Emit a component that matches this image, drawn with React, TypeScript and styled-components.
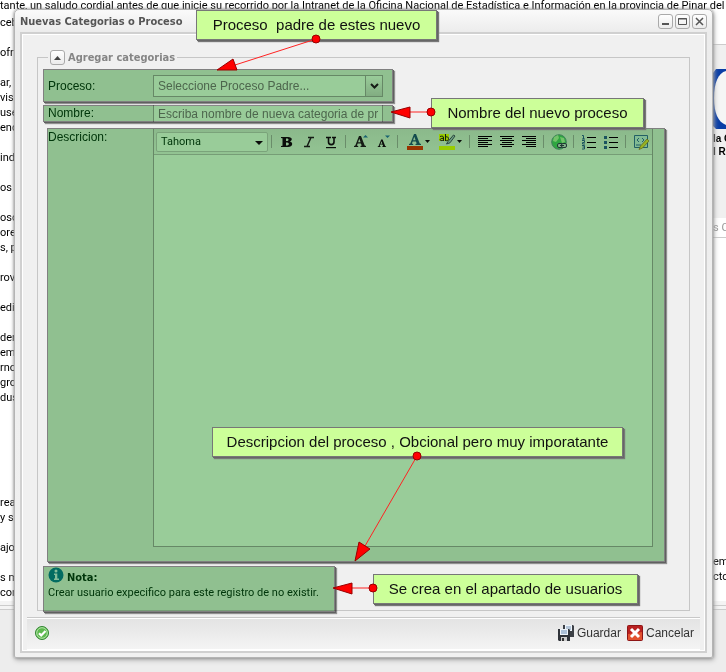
import React from "react";
import styled, { createGlobalStyle, css } from "styled-components";

const tahoma = `Tahoma, "DejaVu Sans Condensed", "DejaVu Sans", sans-serif`;
const bodyFont = `Roboto, "DejaVu Sans Condensed", sans-serif`;
const arial = `"Liberation Sans", Arial, sans-serif`;

const GlobalStyle = createGlobalStyle`
  * { box-sizing: border-box; }
  body { margin: 0; background: #ededed; font-family: ${arial}; font-size: 12px; }
  button, input, select, textarea { font: inherit; color: inherit; margin: 0; padding: 0; border-radius: 0; }
`;

const Page = styled.div`
  position: relative;
  display: grid;
  grid-template-columns: minmax(0, 1fr);
  min-height: 100vh;
  overflow: hidden;
`;

/* ---------- page behind the window ---------- */
const Backdrop = styled.div`
  grid-area: 1 / 1;
  display: flex;
  flex-direction: column;
  font: 11px/15px ${bodyFont};
  color: #000;
  white-space: nowrap;
`;
const Article = styled.div`
  display: grid;
  grid-template-columns: minmax(0, 1fr) 13px;
  height: 601px;
  background: #fff;
  overflow: hidden;
`;
const Intro = styled.p`
  grid-column: 1 / 3;
  margin: -2px 0 0;
  height: 15px;
`;
const Lines = styled.div`
  width: 14px;
  overflow: hidden;
`;
const Line = styled.p`
  margin: 0;
  height: 15px;
`;
const SideColumn = styled.aside`
  display: flex;
  flex-direction: column;
  overflow: hidden;
`;
const Banner = styled.div`
  margin-top: 29px;
  border-top: 1px solid #ccc;
  padding-top: 24px;
  height: 174px;
  background: #f0f0f0;
  font: bold 10px/13px ${arial};
  svg { display: block; margin-bottom: 3px; }
`;
const Crumb = styled.div`
  height: 20px;
  border-bottom: 1px solid #ccc;
  color: #999;
  line-height: 20px;
`;
const SideText = styled.p`
  margin: 316px 0 0;
`;
const PageFooter = styled.div`
  height: 9px;
  background: #f4f4f4;
  border-bottom: 1px solid #ccc;
  &::before { content: ""; display: block; height: 4px; border-bottom: 1px solid #ccc; }
`;

/* ---------- window ---------- */
const Window = styled.section`
  grid-area: 1 / 1;
  position: relative;
  align-self: start;
  margin: 9px 13px 15px 14px;
  padding: 0 5px 4px;
  border: 1px solid #b4b4b4;
  border-radius: 5px 5px 2px 2px;
  background: linear-gradient(#fafafa, #ececec 22px, #f1f1f1);
  box-shadow: 0 0 3px #888, 1px 2px 5px #aaa;
`;
const TitleBar = styled.header`
  display: flex;
  align-items: center;
  gap: 2px;
  height: 22px;
`;
const Title = styled.h1`
  flex: 1;
  margin: 0;
  font: bold 11px/15px ${tahoma};
  color: #555;
`;
const ToolButton = styled.button`
  display: grid;
  place-items: center;
  width: 15px;
  height: 15px;
  border: 1px solid #aaa;
  border-radius: 3px;
  background: linear-gradient(#fff, #ebebeb);
`;
const Frame = styled.div`
  border: 2px solid #d0d0d0;
  box-shadow: inset 0 0 0 1px #fff;
  background: #f0f0f0;
  padding-top: 16px;
`;
const Group = styled.fieldset`
  margin: 0 15px 6px;
  min-width: 0;
  border: 1px solid #c6c6c6;
  padding: 4px 5px 0;
`;
const Legend = styled.legend`
  display: flex;
  align-items: center;
  gap: 3px;
  margin-left: 5px;
  padding: 0 2px;
  height: 15px;
  font: bold 11px/15px ${tahoma};
  color: #858585;
`;

const Highlight = styled.div<{ $width?: number; $height?: number }>`
  position: relative;
  display: flex;
  align-items: center;
  max-width: ${(p) => (p.$width ? `${p.$width}px` : "none")};
  min-height: ${(p) => (p.$height ? `${p.$height}px` : "auto")};
  padding: 0 10px 0 5px;
  color: #041;
  &::after {
    content: "";
    position: absolute;
    inset: 0;
    border: 1px solid #888;
    background: #9c9;
    background-clip: padding-box;
    box-shadow: 1px 1px 0 #666, 2px 2px 1px #999;
    mix-blend-mode: multiply;
    pointer-events: none;
  }
`;
const ProcessRow = styled(Highlight)`
  margin-bottom: 3px;
`;
const NameRow = styled(Highlight)`
  align-items: flex-start;
  margin-bottom: 6px;
`;
const DescriptionRow = styled(Highlight)`
  align-items: stretch;
  margin: 0 19px 4px 4px;
  padding: 1px 12px 15px 1px;
`;
const NoteBox = styled(Highlight)`
  display: block;
  margin-bottom: -2px;
  padding: 1px 5px;
  font: 11px/15px ${bodyFont};
  p { margin: 0; }
`;
const NoteHeading = styled.p`
  display: flex;
  gap: 3px;
  align-items: flex-start;
  height: 18px;
  strong { font: bold 11px/22px ${tahoma}; }
`;
const Label = styled.label`
  flex: none;
  width: 105px;
  line-height: 16px;
`;
const Field = css`
  border: 1px solid #aaa;
  background: #fff;
  color: #808080;
  outline: none;
`;
const Combo = styled.div`
  display: grid;
  grid-template-columns: minmax(0, 1fr) 18px;
  flex: 1;
  height: 22px;
`;
const ComboSelect = styled.select`
  ${Field}
  grid-area: 1 / 1 / 2 / 3;
  appearance: none;
  padding: 0 4px;
  width: 100%;
`;
const Trigger = styled.span`
  grid-area: 1 / 2;
  display: grid;
  place-items: center;
  border: 1px solid #aaa;
  background: linear-gradient(#fff, #d8d8d8);
  pointer-events: none;
`;
const NameInput = styled.input`
  ${Field}
  flex: 1;
  min-width: 0;
  height: 17px;
  padding: 0 4px;
  border-width: 0 1px;
  &::placeholder { color: #808080; opacity: 1; }
`;
const Editor = styled.div`
  flex: 1;
  min-width: 0;
  display: flex;
  flex-direction: column;
  border: 1px solid #aaa;
  border-top: 0;
`;
const Toolbar = styled.div`
  display: flex;
  align-items: center;
  height: 26px;
  padding-left: 2px;
  border-bottom: 1px solid #c4c4c4;
  background: linear-gradient(#e8e8e8, #f4f4f4);
`;
const FontPicker = styled.div`
  display: grid;
  flex: 0 0 112px;
  height: 20px;
  align-items: center;
  border: 1px solid #ccc;
  border-radius: 2px;
  background: #fff;
  font: 11px/15px ${bodyFont};
  svg { grid-area: 1 / 1; justify-self: end; margin: 3px 4px 0; pointer-events: none; }
`;
const FontSelect = styled.select`
  grid-area: 1 / 1;
  appearance: none;
  border: 0;
  outline: none;
  background: transparent;
  padding: 0 4px;
`;
const Separator = styled.i`
  flex: none;
  width: 1px;
  height: 13px;
  margin: 0 4px 0 3px;
  background: #b0b0b0;
`;
const FormatButton = styled.button<{ $wide?: boolean }>`
  flex: none;
  display: flex;
  align-items: center;
  justify-content: center;
  gap: 1px;
  width: ${(p) => (p.$wide ? 32 : 22)}px;
  height: 22px;
  border: 0;
  background: none;
  svg { flex: none; }
`;
const TextArea = styled.textarea`
  display: block;
  height: 391px;
  border: 0;
  outline: none;
  resize: none;
  background: #fff;
`;
const Footer = styled.footer`
  display: flex;
  align-items: center;
  gap: 6px;
  height: 34px;
  margin: 0 5px;
  padding: 0 6px 4px 0;
  border-top: 1px solid #c8c8c8;
  box-shadow: inset 0 1px 0 #fff, inset 0 -2px 0 #fff;
  background: linear-gradient(#e3e3e3, #f5f5f5);
`;
const Status = styled.div`
  display: flex;
  width: 36px;
  padding-left: 7px;
  margin-right: auto;
`;
const ActionButton = styled.button`
  display: flex;
  align-items: center;
  gap: 3px;
  border: 0;
  background: none;
  color: #333;
`;

/* ---------- annotations ---------- */
const Notes = styled.div`
  position: absolute;
  inset: 0;
  pointer-events: none;
`;
const Callout = styled.div<{ $x: number; $y: number; $w: number }>`
  position: absolute;
  left: ${(p) => p.$x}px;
  top: ${(p) => p.$y}px;
  width: ${(p) => p.$w}px;
  height: 30px;
  border: 1px solid #777;
  background: #cf9;
  box-shadow: 1px 1px 0 #666, 2px 2px 1px #777;
  color: #111;
  font-size: 15px;
  line-height: 28px;
  text-align: center;
  white-space: pre;
`;
const Arrows = styled.svg`
  position: absolute;
  inset: 0;
  width: 100%;
  height: 100%;
`;

const Down = () => (
  <svg width="8" height="4" viewBox="0 0 8 4"><path d="M0 0h8L4 4z" fill="#111" /></svg>
);
const Caret = () => (
  <svg width="5" height="3" viewBox="0 0 5 3"><path d="M0 0h5L2.5 3z" fill="#111" /></svg>
);
const Icon = ({ children }: { children: React.ReactNode }) => (
  <svg width="16" height="16" viewBox="0 0 16 16">{children}</svg>
);
const bigA = "M1 13v-1l1.3-.5L6 2h2l3.700 9.500 1.300.5v1H7.500v-1l1.200-.4-.8-2.200H4.700l-.8 2.200 1.300.4v1zM5.100 8.200h2.500L6.300 4.700z";

const BoldIcon = () => (
  <Icon><path fillRule="evenodd" fill="#111" d="M2 3h7c5 0 4.500 4 1.700 4.500C14.500 8 14 13 9 13H2v-1l1.500-.3V4.300L2 4zM7 4.500v2.500h1c2 0 2-2.500 0-2.500zm0 4v3h1.200c2.200 0 2.200-3 0-3z" /></Icon>
);
const ItalicIcon = () => (
  <Icon><path d="M7 3.500h6M3 12.500h6M10 3.500l-4 9" fill="none" stroke="#222" strokeWidth="1.500" /></Icon>
);
const UnderlineIcon = () => (
  <Icon><path d="M3 3.500h5M9 3.500h4M5.500 3.500V8c0 3.500 5.500 3.500 5.500 0V3.500" fill="none" stroke="#111" strokeWidth="1.600" /><path d="M3 13h10v1.200H3z" fill="#111" /></Icon>
);
const GrowIcon = () => (
  <Icon><path fillRule="evenodd" d={bigA} fill="#222" /><path d="M10 3.500h5L12.500 1z" fill="#267abb" /></Icon>
);
const ShrinkIcon = () => (
  <Icon><g transform="translate(2 4) scale(.7)"><path fillRule="evenodd" d={bigA} fill="#111" /></g><path d="M10 1.500h5L12.500 4z" fill="#267abb" /></Icon>
);
const ForeIcon = () => (
  <svg width="17" height="17" viewBox="0 0 17 17"><g transform="translate(1 -1)"><path fillRule="evenodd" d={bigA} fill="#1f5f80" /></g><path d="M0 13h16v4H0z" fill="#ff4000" /></svg>
);
const BackIcon = () => (
  <svg width="17" height="17" viewBox="0 0 17 17">
    <path d="M0 1h10v7H0zM0 13h16v4H0z" fill="#ff0" />
    <path d="M1 3.500c3-1 3.500 0 3.500 1.500v3M4.500 5.300C-1 5.300 1 9 4.500 7M6.500 1v7M6.500 4c4-1.500 4 5 0 3.500" fill="none" stroke="#222" />
    <path d="M14.500 2L9 8.500 7.500 11l3.500-1.200L16 3z" fill="#b5cad9" stroke="#456" />
  </svg>
);
const AlignIcon = ({ side }: { side: "l" | "c" | "r" }) => (
  <Icon>
    {[2, 4, 6, 8, 10, 12].map((y, i) => {
      const w = i % 2 ? 10 : 14;
      const x = side === "l" ? 1 : side === "c" ? 8 - w / 2 : 15 - w;
      return <path key={y} d={`M${x} ${y}h${w}v1h-${w}z`} fill="#000" />;
    })}
  </Icon>
);
const LinkIcon = () => (
  <Icon>
    <circle cx="8" cy="8" r="7.300" fill="#4ed06c" stroke="#6a9e96" />
    <path d="M3 3l4-2 1 3-3 4-3-1zM9 3l4 1 1 4-3 1z" fill="#c0f3b0" />
    <g fill="#d6dde2" stroke="#345"><rect x="6.500" y="9.500" width="5" height="4" rx="1.500" /><rect x="10.500" y="9.500" width="5" height="4" rx="1.500" /></g>
    <path d="M9 11.500h4" stroke="#345" />
  </Icon>
);
const ListIcon = ({ numbered }: { numbered?: boolean }) => (
  <Icon>
    <path d="M6 3h9v1H6zM6 8h9v1H6zM6 13h9v1H6z" fill="#000" />
    {numbered ? (
      <path d="M1 1.500h1.500V5M1 5h3M1 6.500h2.500v2H1.500V10H4M1 11.500h2.500V15H1M1.500 13h2" fill="none" stroke="#2c689e" />
    ) : (
      <path d="M1 2h3v3H1zM1 7h3v3H1zM1 12h3v3H1z" fill="#2c689e" />
    )}
  </Icon>
);
const SourceIcon = () => (
  <Icon>
    <path d="M1.500 1.500h13v12h-13z" fill="#d9eaf7" stroke="#3977a8" />
    <path d="M6 4L4 6l2 2M9 4l2 2-2 2M3 11h5" fill="none" stroke="#3977a8" />
    <path d="M14 5l2 2-6.500 7-3.500 1.500L7.500 12z" fill="#fce038" stroke="#a17a20" strokeWidth=".7" />
  </Icon>
);
const InfoIcon = () => (
  <Icon>
    <circle cx="8" cy="8" r="7.500" fill="#0387a2" />
    <circle cx="8" cy="4" r="1.500" fill="#dcecff" />
    <path d="M6 6.500h3.300v5H11V13H6v-1.500h1V8H6z" fill="#dcecff" />
  </Icon>
);
const CheckIcon = () => (
  <Icon>
    <circle cx="8" cy="8" r="6.500" fill="#5eb94f" stroke="#328632" />
    <circle cx="8" cy="8" r="5.300" fill="none" stroke="#b5e6aa" />
    <path d="M5 8.200l2.200 2.200L11.500 6" fill="none" stroke="#fff" strokeWidth="2.200" />
  </Icon>
);
const SaveIcon = () => (
  <Icon>
    <path d="M5 0h10l1 1v11H5z" fill="#3c4046" /><path d="M7 0h7v6H7z" fill="#eef4fa" /><path d="M8 2h5M8 4h5" stroke="#7c98b8" />
    <path d="M0 4h11l1 1v11H1l-1-1z" fill="#30343a" /><path d="M2 4h8v6H2z" fill="#eef4fa" /><path d="M3 6h6M3 8h6" stroke="#6b8db5" />
    <path d="M3 12h6v4H3z" fill="#ccc" /><path d="M4 13h2v3H4z" fill="#333" />
  </Icon>
);
const CancelIcon = () => (
  <Icon>
    <rect x=".5" y=".5" width="15" height="15" rx="1" fill="#b92020" stroke="#8e1515" />
    <path d="M1 9l14-2v8H1z" fill="#e2512f" />
    <path d="M4 4l8 8M12 4l-8 8" stroke="#fff" strokeWidth="3" />
  </Icon>
);

const leftLines = ["ceb", "", "ofre", "", "ar, e", "visit", " use", "enc", "", "indi", "", "os d", "", "oso", "ore", "s, p", "", "rovi", "", "edio", "", "der", "em", "rno", "grop", "dus", "", "", "", "", "", "", "rea", "y su", "", "ajo", "", "s me", "con"];

const arrows = [
  { dot: [316, 39], end: [235, 65], head: "217,70 233,59 237,70" },
  { dot: [431, 112], end: [410, 112], head: "391,112 410,107 410,118" },
  { dot: [417, 456], end: [365, 546], head: "355,561 359,542 370,549" },
  { dot: [373, 588], end: [352, 588], head: "333,588 352,583 352,594" },
];

export default function App() {
  return (
    <Page>
      <GlobalStyle />
      <Backdrop>
        <Article>
          <Intro>tante, un saludo cordial antes de que inicie su recorrido por la Intranet de la Oficina Nacional de Estadística e Información en la provincia de Pinar del Río</Intro>
          <Lines>{leftLines.map((t, i) => <Line key={i}>{t}</Line>)}</Lines>
          <SideColumn>
            <Banner>
              <svg width="13" height="60" viewBox="0 0 13 60">
                <path d="M3 0h10v60H3L0 57V4z" fill="#0a3ea6" />
                <path d="M13 2C5 4 1 14 1 29s4 24 12 27z" fill="#f5f5f5" />
              </svg>
              <div>la O</div>
              <div>l Río</div>
            </Banner>
            <Crumb>s C</Crumb>
            <SideText>emo<br />cto</SideText>
          </SideColumn>
        </Article>
        <PageFooter />
      </Backdrop>

      <Window aria-label="Nuevas Categorias o Proceso">
        <TitleBar>
          <Title>Nuevas Categorias o Proceso</Title>
          <ToolButton aria-label="Minimizar"><svg width="9" height="9"><path d="M1 6h7v2H1z" fill="#555" /></svg></ToolButton>
          <ToolButton aria-label="Maximizar"><svg width="9" height="9"><path d="M.5 1.500h8v6h-8zM0 2h9" fill="none" stroke="#555" /></svg></ToolButton>
          <ToolButton aria-label="Cerrar"><svg width="9" height="9"><path d="M1 1l7 7M8 1L1 8" stroke="#555" strokeWidth="1.500" /></svg></ToolButton>
        </TitleBar>
        <Frame>
          <Group>
            <Legend>
              <ToolButton aria-label="Contraer"><svg width="7" height="4"><path d="M0 4h7L3.500 0z" fill="#444" /></svg></ToolButton>
              Agregar categorias
            </Legend>
            <ProcessRow $width={350} $height={33}>
              <Label htmlFor="proceso">Proceso:</Label>
              <Combo>
                <ComboSelect id="proceso"><option>Seleccione Proceso Padre...</option></ComboSelect>
                <Trigger><svg width="9" height="6"><path d="M1 1l3.500 3.500L8 1" fill="none" stroke="#222" strokeWidth="2" /></svg></Trigger>
              </Combo>
            </ProcessRow>
            <NameRow $width={350} $height={17}>
              <Label htmlFor="nombre">Nombre:</Label>
              <NameInput id="nombre" placeholder="Escriba nombre de nueva categoria de proceso" />
            </NameRow>
            <DescriptionRow>
              <Label htmlFor="descripcion">Descricion:</Label>
              <Editor>
                <Toolbar>
                  <FontPicker>
                    <FontSelect aria-label="Fuente"><option>Tahoma</option></FontSelect>
                    <Down />
                  </FontPicker>
                  <Separator />
                  <FormatButton aria-label="Negrita"><BoldIcon /></FormatButton>
                  <FormatButton aria-label="Cursiva"><ItalicIcon /></FormatButton>
                  <FormatButton aria-label="Subrayado"><UnderlineIcon /></FormatButton>
                  <Separator />
                  <FormatButton aria-label="Aumentar texto"><GrowIcon /></FormatButton>
                  <FormatButton aria-label="Reducir texto"><ShrinkIcon /></FormatButton>
                  <Separator />
                  <FormatButton $wide aria-label="Color de texto"><ForeIcon /><Caret /></FormatButton>
                  <FormatButton $wide aria-label="Color de resaltado"><BackIcon /><Caret /></FormatButton>
                  <Separator />
                  <FormatButton aria-label="Alinear a la izquierda"><AlignIcon side="l" /></FormatButton>
                  <FormatButton aria-label="Centrar"><AlignIcon side="c" /></FormatButton>
                  <FormatButton aria-label="Alinear a la derecha"><AlignIcon side="r" /></FormatButton>
                  <Separator />
                  <FormatButton aria-label="Enlace"><LinkIcon /></FormatButton>
                  <Separator />
                  <FormatButton aria-label="Lista numerada"><ListIcon numbered /></FormatButton>
                  <FormatButton aria-label="Lista"><ListIcon /></FormatButton>
                  <Separator />
                  <FormatButton aria-label="Editar código"><SourceIcon /></FormatButton>
                </Toolbar>
                <TextArea id="descripcion" />
              </Editor>
            </DescriptionRow>
            <NoteBox $width={292} $height={46}>
              <NoteHeading><InfoIcon /><strong>Nota:</strong></NoteHeading>
              <p>Crear usuario expecifico para este registro de no existir.</p>
            </NoteBox>
          </Group>
          <Footer>
            <Status><CheckIcon /></Status>
            <ActionButton><SaveIcon />Guardar</ActionButton>
            <ActionButton><CancelIcon />Cancelar</ActionButton>
          </Footer>
        </Frame>
      </Window>

      <Notes>
        <Callout $x={196} $y={10} $w={241}>{"Proceso  padre de estes nuevo"}</Callout>
        <Callout $x={431} $y={98} $w={213}>Nombre del nuevo proceso</Callout>
        <Callout $x={212} $y={427} $w={411}>Descripcion del proceso , Obcional pero muy imporatante</Callout>
        <Callout $x={373} $y={574} $w={265}>Se crea en el apartado de usuarios</Callout>
        <Arrows>
          {arrows.map((a) => (
            <g key={a.head}>
              <path d={`M${a.dot[0]} ${a.dot[1]}L${a.end[0]} ${a.end[1]}`} stroke="#f22" />
              <polygon points={a.head} fill="red" stroke="#900" />
              <circle cx={a.dot[0]} cy={a.dot[1]} r="4" fill="red" stroke="#900" />
            </g>
          ))}
        </Arrows>
      </Notes>
    </Page>
  );
}
